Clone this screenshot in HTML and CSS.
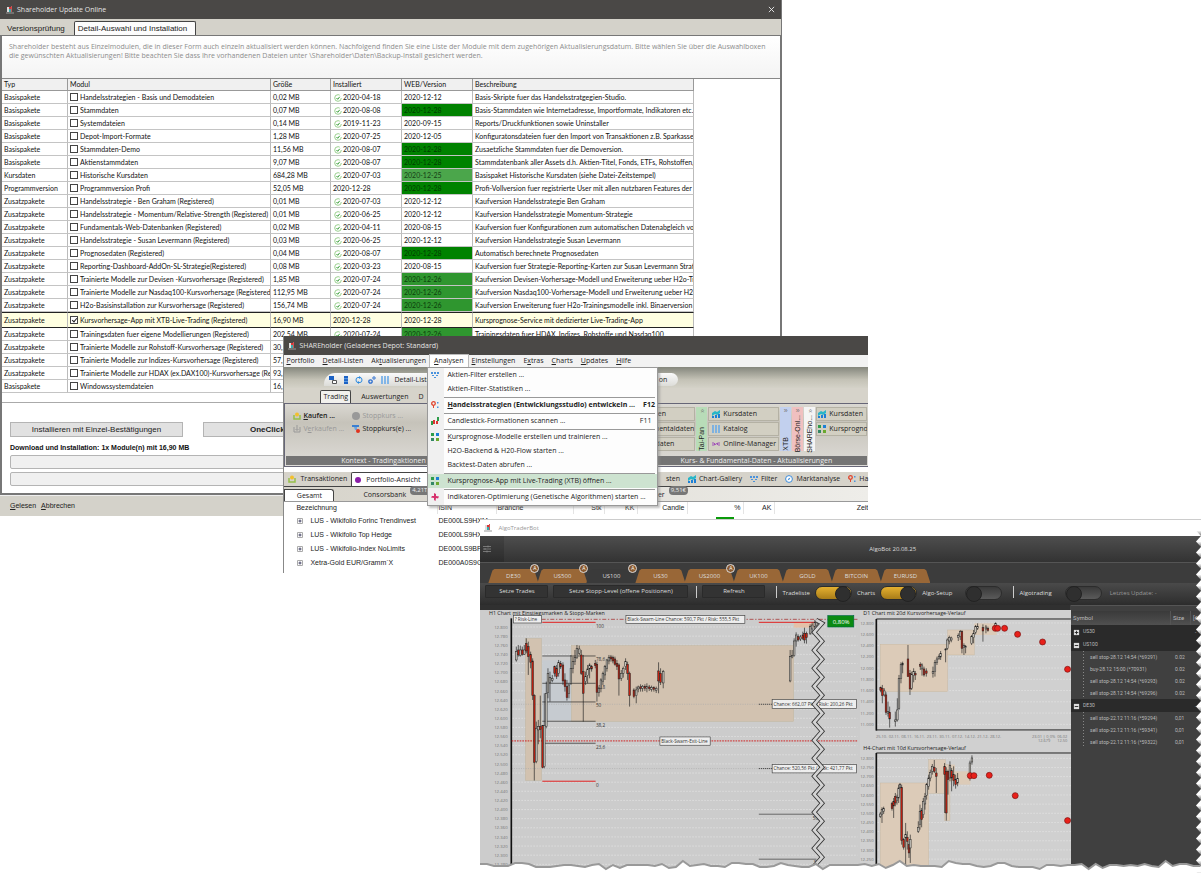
FILE: index.html
```html
<!DOCTYPE html>
<html lang="de">
<head>
<meta charset="utf-8">
<title>Shareholder Update Online</title>
<link rel="stylesheet" href="styles.css">
</head>
<body>
<svg class="defs" aria-hidden="true">
  <symbol id="i-app" viewBox="0 0 8 8"><path d="M1 1h2v5H1z" fill="#ddd"/><path d="M3 1h2v2H3z" fill="#d33"/><path d="M3 3h2v3H3z" fill="#3aa"/><path d="M5 0h1v6H5z" fill="#c55"/><path d="M0 7h8" stroke="#999"/></symbol>
  <symbol id="i-ok" viewBox="0 0 8 8"><circle cx="4" cy="4" r="3.3" fill="#fff" stroke="#9bd08f" stroke-dasharray="17 4"/><path d="M2.5 4l1.2 1.3L5.7 2.8" fill="none" stroke="#2f9a2f"/></symbol>
  <symbol id="i-chart" viewBox="0 0 8 8"><path d="M0 3l3-2 2 1 3-2v3L5 5 3 4 0 6z" fill="#29b6c8"/><path d="M0 6h2v2H0zM3 5h2v3H3zM6 4h2v4H6z" fill="#1c7fd6"/></symbol>
  <symbol id="i-filter" viewBox="0 0 8 8"><path d="M0 1h2v2H0zM3 1h2v2H3zM6 1h2v2H6zM1 4h2v1H1zM5 4h2v1H5zM3 6h2v1H3z" fill="#4a92dc"/></symbol>
  <symbol id="i-grid" viewBox="0 0 8 8"><path d="M0 0h3v3H0z" fill="#2e9c4a"/><path d="M5 0h3v3H5z" fill="#1c7fd6"/><path d="M0 5h3v3H0z" fill="#386"/><path d="M5 5h3v3H5z" fill="#6aa82e"/></symbol>
  <symbol id="i-pin" viewBox="0 0 8 8"><circle cx="2.500" cy="2.500" r="1.800" fill="none" stroke="#e0452e" stroke-width="1.300"/><path d="M2.500 4.500V7" stroke="#e0452e"/><path d="M6 1h1.500v1.500H6zM6 5.500h1.500V7H6z" fill="#4a92dc"/></symbol>
  <symbol id="i-candle" viewBox="0 0 8 8"><path d="M0 4h2v4H0zM6 0h2v4H6z" fill="#2e9c4a"/><path d="M2 3h2v4H2zM5 4h2v3H5z" fill="#d33"/></symbol>
  <symbol id="i-dna" viewBox="0 0 8 8"><path d="M3 0l2 1v2l3 .5L7 5.500 5 5 4.500 8 3 7V5L0 4.500 1 3h2z" fill="#d6306c"/></symbol>
  <symbol id="i-buy" viewBox="0 0 8 8"><path d="M1 3v4h6V3" fill="none" stroke="#96c04a" stroke-width="1.500"/><circle cx="4" cy="2.500" r="2" fill="#f3c02c"/></symbol>
  <symbol id="i-sell" viewBox="0 0 8 8"><path d="M1 2v5h6V2M4 0v5M2.500 4L4 5.500 5.500 4" fill="none" stroke="#999"/></symbol>
  <symbol id="i-stop" viewBox="0 0 8 8"><path d="M0 0h7v2H0z" fill="#3b7fd0"/><path d="M2 2h3v3H3z" fill="#6da4e0"/><circle cx="6" cy="6" r="2" fill="#e0331e"/></symbol>
  <symbol id="i-copy" viewBox="0 0 8 8"><path d="M0 0h5v4H0z" fill="#1c62c4"/><path d="M3.500 4.500h4v3h-4z" fill="#fff" stroke="#555"/></symbol>
  <symbol id="i-server" viewBox="0 0 8 8"><path d="M2 0h4v8H2z" fill="#1c62c4"/><path d="M2 2.700h4M2 5.400h4" stroke="#9cf" stroke-width=".6"/></symbol>
  <symbol id="i-sync" viewBox="0 0 8 8"><path d="M5 1.500H3Q1 1.500 1 4T3 6.500M3 6.500h2Q7 6.500 7 4T5 1.500" fill="none" stroke="#2d8be0"/><path d="M4 0l2 1.500L4 3zM4 5v3L2 6.500z" fill="#2d8be0"/></symbol>
  <symbol id="i-gears" viewBox="0 0 8 8"><circle cx="2.500" cy="5.500" r="1.700" fill="none" stroke="#2d6fd0" stroke-width="1.300"/><circle cx="6" cy="2" r="1.200" fill="none" stroke="#2d6fd0"/></symbol>
  <symbol id="i-cols" viewBox="0 0 8 8"><path d="M1 0v8M4 0v8M7 0v8" stroke="#6aaae8" stroke-width="1.600"/></symbol>
  <symbol id="i-online" viewBox="0 0 8 8"><path d="M1 2v4M7 2v4M2.500 3v2l3-2v2" fill="none" stroke="#a050b8"/></symbol>
  <symbol id="i-compass" viewBox="0 0 8 8"><circle cx="4" cy="4" r="3.400" fill="#fff" stroke="#3b8ad8"/><path d="M2.500 5.500L3.500 3.500 5.500 2.500 4.500 4.500z" fill="#3b8ad8"/></symbol>
  <symbol id="i-plus" viewBox="0 0 8 8"><path d="M1.500 1.500h5v5h-5z" fill="#fff" stroke="#aaa"/><path d="M2.500 4h3M4 2.500v3" stroke="#446"/></symbol>
  <symbol id="i-tplus" viewBox="0 0 8 8"><path d="M1 1h6v6H1z" fill="#ddd"/><path d="M2 4h4M4 2v4" stroke="#222"/></symbol>
  <symbol id="i-tminus" viewBox="0 0 8 8"><path d="M1 1h6v6H1z" fill="#ddd"/><path d="M2 4h4" stroke="#222"/></symbol>
</svg>

<main class="desktop">

<section class="win update" aria-label="Shareholder Update Online">
  <header class="titlebar"><svg class="ico"><use href="#i-app"/></svg><h1>Shareholder Update Online</h1><button class="close" aria-label="Schließen"><svg viewBox="0 0 8 8"><path d="M1 1l6 6M7 1L1 7" stroke="#eee"/></svg></button></header>
  <nav class="tabs"><button class="tab">Versionsprüfung</button><button class="tab on">Detail-Auswahl und Installation</button></nav>
  <div class="panel">
    <p class="intro">Shareholder besteht aus Einzelmodulen, die in dieser Form auch einzeln aktualisiert werden können. Nachfolgend finden Sie eine Liste der Module mit dem zugehörigen Aktualisierungsdatum. Bitte wählen Sie über die Auswahlboxen<br>die gewünschten Aktualisierungen! Bitte beachten Sie dass Ihre vorhandenen Dateien unter \Shareholder\Daten\Backup-Install gesichert werden.</p>
    <div class="modwrap">
    <table class="mods">
      <colgroup><col class="c1"><col class="c2"><col class="c3"><col class="c4"><col class="c5"><col class="c6"></colgroup>
      <thead><tr><th>Typ</th><th>Modul</th><th>Größe</th><th>Installiert</th><th>WEB/Version</th><th>Beschreibung</th></tr></thead>
      <tbody>
      <tr><td>Basispakete</td><td><label><input type="checkbox">Handelsstrategien - Basis und Demodateien</label></td><td>0,02 MB</td><td><svg><use href="#i-ok"/></svg>2020-04-18</td><td>2020-12-12</td><td>Basis-Skripte fuer das Handelsstratgegien-Studio.</td></tr>
      <tr><td>Basispakete</td><td><label><input type="checkbox">Stammdaten</label></td><td>0,07 MB</td><td><svg><use href="#i-ok"/></svg>2020-08-08</td><td class="g1">2020-12-28</td><td>Basis-Stammdaten wie Internetadresse, Importformate, Indikatoren etc.</td></tr>
      <tr><td>Basispakete</td><td><label><input type="checkbox">Systemdateien</label></td><td>0,14 MB</td><td><svg><use href="#i-ok"/></svg>2019-11-23</td><td>2020-09-15</td><td>Reports/Druckfunktionen sowie Uninstaller</td></tr>
      <tr><td>Basispakete</td><td><label><input type="checkbox">Depot-Import-Formate</label></td><td>1,28 MB</td><td><svg><use href="#i-ok"/></svg>2020-07-25</td><td>2020-12-05</td><td>Konfiguratonsdateien fuer den Import von Transaktionen z.B. Sparkasse, Vo</td></tr>
      <tr><td>Basispakete</td><td><label><input type="checkbox">Stammdaten-Demo</label></td><td>11,56 MB</td><td><svg><use href="#i-ok"/></svg>2020-08-07</td><td class="g1">2020-12-28</td><td>Zusaetzliche Stammdaten fuer die Demoversion.</td></tr>
      <tr><td>Basispakete</td><td><label><input type="checkbox">Aktienstammdaten</label></td><td>9,07 MB</td><td><svg><use href="#i-ok"/></svg>2020-08-07</td><td class="g1">2020-12-28</td><td>Stammdatenbank aller Assets d.h. Aktien-Titel, Fonds, ETFs, Rohstoffen, De</td></tr>
      <tr><td>Kursdaten</td><td><label><input type="checkbox">Historische Kursdaten</label></td><td>684,28 MB</td><td><svg><use href="#i-ok"/></svg>2020-07-03</td><td class="g3">2020-12-25</td><td>Basispaket Historische Kursdaten (siehe Datei-Zeitstempel)</td></tr>
      <tr><td>Programmversion</td><td><label><input type="checkbox">Programmversion Profi</label></td><td>52,05 MB</td><td>2020-12-28</td><td class="g1">2020-12-28</td><td>Profi-Vollversion fuer registrierte User mit allen nutzbaren Features der Boe</td></tr>
      <tr><td>Zusatzpakete</td><td><label><input type="checkbox">Handelsstrategie - Ben Graham (Registered)</label></td><td>0,01 MB</td><td><svg><use href="#i-ok"/></svg>2020-07-03</td><td>2020-12-12</td><td>Kaufversion Handelsstrategie Ben Graham</td></tr>
      <tr><td>Zusatzpakete</td><td><label><input type="checkbox">Handelsstrategie - Momentum/Relative-Strength (Registered)</label></td><td>0,01 MB</td><td><svg><use href="#i-ok"/></svg>2020-06-25</td><td>2020-12-12</td><td>Kaufversion Handelsstrategie Momentum-Strategie</td></tr>
      <tr><td>Zusatzpakete</td><td><label><input type="checkbox">Fundamentals-Web-Datenbanken (Registered)</label></td><td>0,02 MB</td><td><svg><use href="#i-ok"/></svg>2020-04-11</td><td>2020-08-15</td><td>Kaufversion fuer Konfigurationen zum automatischen Datenabgleich von Sta</td></tr>
      <tr><td>Zusatzpakete</td><td><label><input type="checkbox">Handelsstrategie - Susan Levermann (Registered)</label></td><td>0,03 MB</td><td><svg><use href="#i-ok"/></svg>2020-06-25</td><td>2020-12-12</td><td>Kaufversion Handelsstrategie Susan Levermann</td></tr>
      <tr><td>Zusatzpakete</td><td><label><input type="checkbox">Prognosedaten (Registered)</label></td><td>0,04 MB</td><td><svg><use href="#i-ok"/></svg>2020-08-07</td><td class="g1">2020-12-28</td><td>Automatisch berechnete Prognosedaten</td></tr>
      <tr><td>Zusatzpakete</td><td><label><input type="checkbox">Reporting-Dashboard-AddOn-SL-Strategie(Registered)</label></td><td>0,08 MB</td><td><svg><use href="#i-ok"/></svg>2020-03-23</td><td>2020-08-15</td><td>Kaufversion fuer Strategie-Reporting-Karten zur Susan Levermann Strategi</td></tr>
      <tr><td>Zusatzpakete</td><td><label><input type="checkbox">Trainierte Modelle zur Devisen -Kursvorhersage (Registered)</label></td><td>1,85 MB</td><td><svg><use href="#i-ok"/></svg>2020-07-24</td><td class="g2">2020-12-26</td><td>Kaufversion Devisen-Vorhersage-Modell und Erweiterung ueber H2o-Traini</td></tr>
      <tr><td>Zusatzpakete</td><td><label><input type="checkbox">Trainierte Modelle zur Nasdaq100-Kursvorhersage (Registered)</label></td><td>112,95 MB</td><td><svg><use href="#i-ok"/></svg>2020-07-24</td><td class="g2">2020-12-26</td><td>Kaufversion Nasdaq100-Vorhersage-Modell und Erweiterung ueber H2o-Tr</td></tr>
      <tr><td>Zusatzpakete</td><td><label><input type="checkbox">H2o-Basisinstallation zur Kursvorhersage (Registered)</label></td><td>156,74 MB</td><td><svg><use href="#i-ok"/></svg>2020-07-24</td><td class="g2">2020-12-26</td><td>Kaufversion Erweiterung fuer H2o-Trainingsmodelle inkl. Binaerversion und</td></tr>
      <tr class="sel"><td>Zusatzpakete</td><td><label><input type="checkbox" checked>Kursvorhersage-App mit XTB-Live-Trading (Registered)</label></td><td>16,90 MB</td><td>2020-12-28</td><td>2020-12-28</td><td>Kursprognose-Service mit dedizierter Live-Trading-App</td></tr>
      <tr><td>Zusatzpakete</td><td><label><input type="checkbox">Trainingsdaten fuer eigene Modellierungen (Registered)</label></td><td>202,54 MB</td><td><svg><use href="#i-ok"/></svg>2020-07-24</td><td class="g2">2020-12-26</td><td>Trainingsdaten fuer HDAX, Indizes, Rohstoffe und Nasdaq100</td></tr>
      <tr><td>Zusatzpakete</td><td><label><input type="checkbox">Trainierte Modelle zur Rohstoff-Kursvorhersage (Registered)</label></td><td>30,</td><td></td><td></td><td></td></tr>
      <tr><td>Zusatzpakete</td><td><label><input type="checkbox">Trainierte Modelle zur Indizes-Kursvorhersage (Registered)</label></td><td>57,</td><td></td><td></td><td></td></tr>
      <tr><td>Zusatzpakete</td><td><label><input type="checkbox">Trainierte Modelle zur HDAX (ex.DAX100)-Kursvorhersage (Regis</label></td><td>93,</td><td></td><td></td><td></td></tr>
      <tr><td>Basispakete</td><td><label><input type="checkbox">Windowssystemdateien</label></td><td>16,</td><td></td><td></td><td></td></tr>
      </tbody>
    </table>
    </div>
    <div class="actions"><button>Installieren mit Einzel-Bestätigungen</button><button class="strong">OneClick</button></div>
    <p class="status">Download und Installation: 1x Module(n) mit 16,90 MB</p>
    <div class="bar" role="progressbar" aria-label="Download"></div>
    <div class="bar" role="progressbar" aria-label="Installation"></div>
  </div>
  <footer class="foot"><button><u>G</u>elesen</button><button><u>A</u>bbrechen</button></footer>
</section>

<section class="win holder" aria-label="SHAREholder">
  <header class="titlebar"><svg class="ico"><use href="#i-app"/></svg><h2>SHAREholder (Geladenes Depot: Standard)</h2></header>
  <nav class="menubar"><button><u>P</u>ortfolio</button><button><u>D</u>etail-Listen</button><button>Ak<u>t</u>ualisierungen</button><button class="open"><u>A</u>nalysen</button><button><u>E</u>instellungen</button><button>E<u>x</u>tras</button><button><u>C</u>harts</button><button><u>U</u>pdates</button><button><u>H</u>ilfe</button></nav>
  <div class="quick"><div class="pill"><svg><use href="#i-copy"/></svg><svg><use href="#i-server"/></svg><svg><use href="#i-sync"/></svg><svg><use href="#i-gears"/></svg><svg><use href="#i-cols"/></svg><span>Detail-Listen</span><span class="end">on</span></div></div>
  <nav class="rtabs"><button class="on">Trading</button><button>Auswertungen</button><button>D</button></nav>
  <div class="ribbon">
    <div class="group g-left">
      <div class="cmds">
        <button><svg><use href="#i-buy"/></svg><b><u>K</u>aufen ...</b></button>
        <button disabled><svg viewBox="0 0 8 8"><circle cx="4" cy="4" r="4" fill="#999"/></svg>Stoppkurs ...</button>
        <button disabled><svg><use href="#i-sell"/></svg><span>V<u>e</u>rkaufen ...</span></button>
        <button><svg><use href="#i-stop"/></svg>Stoppkurs(e) ...</button>
      </div>
      <h3>Kontext - Tradingaktionen</h3>
    </div>
    <div class="group g-right">
      <div class="sources">
        <div class="stack first"><button>Kursdaten</button><button>Fundamentaldaten</button><button>Stammdaten</button></div>
        <div class="vert green"><i>«</i><span>Tai-Pan</span></div>
        <div class="stack"><button><svg><use href="#i-chart"/></svg>Kursdaten</button><button><svg><use href="#i-cols"/></svg>Katalog</button><button><svg><use href="#i-online"/></svg>Online-Manager</button></div>
        <div class="vert blue"><i>»</i><span>XTB</span></div>
        <div class="vert red"><i>»</i><span>Börse-Onl...</span></div>
        <div class="vert white"><i>«</i><span>SHAREho...</span></div>
        <div class="stack narrow"><button><svg><use href="#i-chart"/></svg>Kursdaten</button><button><svg><use href="#i-grid"/></svg>Kursprognose</button></div>
      </div>
      <h3>Kurs- &amp; Fundamental-Daten - Aktualisierungen</h3>
    </div>
  </div>
  <nav class="dtabs">
    <button><svg><use href="#i-buy"/></svg>Transaktionen</button><button class="on"><svg viewBox="0 0 8 8"><circle cx="4" cy="4" r="3" fill="#8a1ea8"/></svg>Portfolio-Ansicht</button>
    <div class="more"><button>sten</button><button><svg><use href="#i-chart"/></svg>Chart-Gallery</button><button><svg><use href="#i-filter"/></svg>Filter</button><button><svg><use href="#i-compass"/></svg>Marktanalyse</button><button><svg><use href="#i-pin"/></svg>Ha</button></div>
  </nav>
  <nav class="stabs"><button class="on">Gesamt</button><button class="bank">Consorsbank<span class="badge">4,21T€</span></button><button class="ker">ker<span class="badge">9,51€</span></button></nav>
  <table class="pos">
    <colgroup><col class="p1"><col class="p2"><col class="p3"><col class="p4"><col class="p5"><col class="p6"><col class="p7"><col class="p8"><col class="p9"></colgroup>
    <thead><tr><th>Bezeichnung</th><th>ISIN</th><th>Branche</th><th class="r">Stk</th><th class="r">KK</th><th class="r">Candle</th><th class="r">%</th><th class="r">AK</th><th class="r">Zeit</th></tr></thead>
    <tbody>
    <tr><td><svg><use href="#i-plus"/></svg>LUS - Wikifolio Forinc Trendinvest</td><td>DE000LS9HXM</td><td></td><td></td><td></td><td></td><td class="top"><span class="gain"></span></td><td></td><td></td></tr>
    <tr><td><svg><use href="#i-plus"/></svg>LUS - Wikifolio Top Hedge</td><td>DE000LS9HXS</td><td></td><td></td><td></td><td></td><td></td><td></td><td></td></tr>
    <tr><td><svg><use href="#i-plus"/></svg>LUS - Wikifolio-Index NoLimits</td><td>DE000LS9BFD</td><td></td><td></td><td></td><td></td><td></td><td></td><td></td></tr>
    <tr><td><svg><use href="#i-plus"/></svg>Xetra-Gold EUR/Gramm`X</td><td>DE000A0S9GB</td><td></td><td></td><td></td><td></td><td></td><td></td><td></td></tr>
    </tbody>
  </table>
  <div class="menu" role="menu">
    <button role="menuitem"><svg><use href="#i-filter"/></svg>Aktien-Filter erstellen ...</button>
    <button role="menuitem"><svg></svg>Aktien-Filter-Statistiken ...</button>
    <hr>
    <button role="menuitem" class="strong"><svg><use href="#i-pin"/></svg><span><u>H</u>andelsstrategien (Entwicklungsstudio) entwickeln ...</span><kbd>F12</kbd></button>
    <hr>
    <button role="menuitem"><svg><use href="#i-candle"/></svg>Candlestick-Formationen scannen ...<kbd>F11</kbd></button>
    <hr>
    <button role="menuitem"><svg><use href="#i-grid"/></svg><span><u>K</u>ursprognose-Modelle erstellen und trainieren ...</span></button>
    <button role="menuitem"><svg></svg>H2O-Backend &amp; H20-Flow starten ...</button>
    <button role="menuitem"><svg></svg>Backtest-Daten abrufen ...</button>
    <hr>
    <button role="menuitem" class="hot"><svg><use href="#i-grid"/></svg>Kursprognose-App mit Live-Trading (XTB) öffnen ...</button>
    <hr>
    <button role="menuitem"><svg><use href="#i-dna"/></svg>Indikatoren-Optimierung (Genetische Algorithmen) starten ...</button>
  </div>
</section>

<section class="win bot" aria-label="AlgoTraderBot">
  <header class="bottitle"><svg class="ico"><use href="#i-app"/></svg><span>AlgoTraderBot</span></header>
  <div class="bothead"><button class="tune" aria-label="Optionen"><svg viewBox="0 0 8 8"><path d="M0 1.500h8M0 4h8M0 6.500h8M5 .5v2M2 3v2M4 5.500v2" stroke="#888" fill="none" stroke-width=".8"/></svg></button><h2>AlgoBot 20.08.25</h2></div>
  <nav class="symbols">
    <div><button>DE30</button><i>A</i></div><div><button>US500</button><i>A</i></div><div class="on"><button>US100</button><i>A</i></div><div><button>US30</button></div><div><button>US2000</button><i>A</i></div><div><button>UK100</button></div><div><button>GOLD</button></div><div><button>BITCOIN</button></div><div><button>EURUSD</button></div>
  </nav>
  <div class="tools">
    <button class="t1">Setze Trades</button><button class="t2">Setze Stopp-Level (offene Positionen)</button><span class="sep"></span><button class="t1">Refresh</button><span class="sep"></span>
    <label>Tradeliste<input type="checkbox" checked></label>
    <label>Charts<input type="checkbox" checked></label>
    <label class="wide">Algo-Setup<input type="checkbox"></label>
    <span class="sep"></span>
    <label class="wide">Algotrading<input type="checkbox"></label>
    <span class="stamp">Letztes Update: -</span>
  </div>
  <div class="board">
    <svg id="h1" viewBox="15 0 1140 804"></svg>
    <div class="side-charts">
      <svg id="d1" viewBox="0 0 633 418"></svg>
      <svg id="h4" viewBox="0 418 633 386"></svg>
    </div>
    <div class="trades">
    <table>
      <colgroup><col><col class="size"><col class="rest"></colgroup>
      <thead><tr><th>Symbol</th><th>Size</th><th>[€</th></tr></thead>
      <tbody>
        <tr class="grp"><td><svg><use href="#i-tplus"/></svg>US30</td><td></td><td>-</td></tr>
        <tr class="grp"><td><svg><use href="#i-tminus"/></svg>US100</td><td></td><td></td></tr>
        <tr><td>sell stop-28.12 14:54 (*69291)</td><td>0.02</td><td></td></tr>
        <tr><td>buy-28.12 15:00 (*70931)</td><td>0.02</td><td></td></tr>
        <tr><td>sell stop-28.12 14:54 (*69293)</td><td>0.02</td><td></td></tr>
        <tr><td>sell stop-28.12 14:54 (*69296)</td><td>0.02</td><td></td></tr>
        <tr class="grp"><td><svg><use href="#i-tminus"/></svg>DE30</td><td></td><td>-</td></tr>
        <tr><td>sell stop-22.12 11:16 (*59294)</td><td>0,01</td><td></td></tr>
        <tr><td>sell stop-22.12 11:16 (*59341)</td><td>0,01</td><td></td></tr>
        <tr><td>sell stop-22.12 11:16 (*59322)</td><td>0,01</td><td></td></tr>
      </tbody>
    </table>
    </div>
  </div>
  <svg class="torn" viewBox="0 0 721 14" preserveAspectRatio="none" aria-hidden="true"><path id="torn" fill="#fff" stroke="#999" stroke-width="2"/></svg>
  <svg class="teeth" aria-hidden="true"><defs><linearGradient id="tg" x1="0" x2="0" y1="0" y2="1"><stop offset="0" stop-color="#fff"/><stop offset=".5" stop-color="#fff"/><stop offset="1" stop-color="#777"/></linearGradient><pattern id="tp" width="5" height="11" patternUnits="userSpaceOnUse"><path d="M5 0L0 5.500 5 11z" fill="url(#tg)"/></pattern></defs><rect width="5" height="100%" fill="url(#tp)"/></svg>
</section>
</main>
<script src="charts.js"></script>
</body>
</html>
```

FILE: styles.css
```css
* { box-sizing: border-box; }
body { margin: 0; background: #fff; color: #222; font-family: "Open Sans", "Liberation Sans", sans-serif; font-size: 7px; line-height: 10px; }
h1, h2, h3, p { margin: 0; font-size: inherit; font-weight: normal; }
button { font: inherit; color: inherit; background: none; border: 0; padding: 0; margin: 0; white-space: nowrap; }
input { margin: 0; appearance: none; }
table { border-spacing: 0; table-layout: fixed; }
th, td { padding: 0; font-weight: normal; text-align: left; white-space: nowrap; overflow: hidden; }
svg { width: 8px; height: 8px; flex: none; display: block; }
.defs { display: none; }

.desktop { position: relative; min-height: 100vh; overflow: hidden; }
.win { position: absolute; }
.titlebar { height: 19px; display: flex; align-items: center; gap: 3px; padding: 0 6px; background: #4a4846; color: #e4e4e4; }
.close { margin-left: auto; }
.close svg { width: 7px; height: 7px; }

/* Update window */
.update { left: 0; top: 0; width: 65.1%; font-family: "Liberation Sans", sans-serif; background: #d4d2ca; border-right: 1px solid #777; }
.update h1 { font-family: "Open Sans", sans-serif; }
.tabs { height: 16px; display: flex; align-items: flex-end; padding-left: 2px; font-size: 8px; }
.tab { height: 13px; padding: 0 9px 0 5px; }
.tab.on { height: 14px; background: #fcfcfc; border: 1px solid #444; border-bottom: 0; border-radius: 2px 2px 0 0; padding: 0 8px 0 3px; }
.panel { background: #fff; border: solid #777; border-width: 1px 1px 2px 2px; padding-bottom: 4px; }
.intro { height: 42px; padding: 6px 0 0 7px; color: #8c8c8c; line-height: 9px; font-family: "Open Sans", sans-serif; background: linear-gradient(#fff, #f4f4f4); white-space: nowrap; }
.modwrap { border-top: 1px solid #888; border-bottom: 1px solid #aaa; padding-bottom: 9px; }
.mods { width: 692px; max-width: 100%; color: #111; font-family: Lato, "Liberation Sans", sans-serif; }
.c1 { width: 66px; } .c2 { width: 203px; } .c3 { width: 60px; } .c4, .c5 { width: 71px; }
.mods th, .mods td { height: 13px; line-height: 12px; padding-left: 2px; border-right: 1px solid #bbb; border-bottom: 1px solid #c4c4c4; }
.mods th { height: 12px; line-height: 11px; background: #f0f0f0; border-color: #999; }
.mods td svg { display: inline-block; vertical-align: middle; margin-right: 1px; margin-left: 1px; }
.mods label { display: flex; align-items: center; gap: 2px; }
.mods input { width: 8px; height: 8px; border: 1px solid #444; background: #fff; flex: none; position: relative; }
.mods input:checked::after { content: ""; position: absolute; left: 2px; top: 0; width: 2px; height: 4px; border: solid #222; border-width: 0 1px 1px 0; box-sizing: content-box; transform: rotate(40deg); }
.mods .g1 { background: #008200; color: #023c02; }
.mods .g2 { background: #2f962f; color: #0c3f0c; }
.mods .g3 { background: #4ba64b; color: #164016; }
.mods .sel td { height: 16px; background: #ffffe1; border-top: 1px solid #222; border-bottom: 1px solid #222; }
.actions { display: flex; gap: 20px; padding: 19px 0 0 8px; font-size: 8px; }
.actions button { width: 173px; height: 15px; background: #e1e1e1; border: 1px solid #b4b4b4; }
.actions .strong { font-weight: bold; text-align: left; padding-left: 46px; }
.status { font-weight: bold; margin: 6px 8px 2px; color: #111; }
.bar { height: 14px; margin: 0 8px 3px; border: 1px solid #b4b4b4; border-radius: 2px; background: #f0f0f0; }
.foot { height: 21px; display: flex; align-items: center; gap: 5px; padding: 0 10px; border-top: 1px solid #eee; }

/* Main application window */
.holder { left: 23.6%; top: 336px; width: 48.7%; padding-bottom: 3px; background: #fff; border-left: 1px solid #888; }
.holder .titlebar { padding-left: 4px; }
.menubar { height: 12px; display: flex; background: #f2f2f2; }
.menubar button { padding: 0 4px; }
.menubar button:first-child { padding-left: 2px; }
.menubar .open { background: #fff; outline: 1px solid #bbb; }
.quick { height: 21px; padding: 6px 190px 2px 40px; background: linear-gradient(#84867c, #c4c2b6 60%, #d4d2c8); }
.pill { height: 13px; display: flex; align-items: center; gap: 5px; padding: 0 11px 0 5px; background: linear-gradient(#fafafa, #dcdcd8); border-radius: 12px 7px 7px 0; }
.pill .end { margin-left: auto; }
.rtabs { height: 15px; display: flex; align-items: flex-end; gap: 10px; padding-left: 36px; background: #d6d3ca; }
.rtabs button { height: 13px; }
.rtabs .on { background: #f2f1ee; border: 1px solid #444; border-bottom: 0; border-radius: 2px 2px 0 0; padding: 0 2px; }
.ribbon { display: flex; height: 64px; border: solid #667; border-width: 1px 0 1px 1px; background: linear-gradient(#dad8d2, #c6c3ba 30%, #dedcd8); padding: 1px; }
.group { display: flex; flex-direction: column; justify-content: space-between; min-width: 0; }
.g-left { width: 194px; }
.g-right { flex: 1; }
.group h3 { height: 9px; line-height: 9px; background: #747474; color: #eee; text-align: center; white-space: nowrap; }
.group.g-right h3 { padding-left: 165px; }
.cmds { display: grid; grid-template-columns: 59px 80px; gap: 3px 0; padding: 6px 0 0 7px; }
.cmds button { display: flex; align-items: center; gap: 2px; }
.cmds b { font-weight: 600; }
.cmds button:disabled { color: #999; }
.sources { display: flex; gap: 1px; padding-top: 2px; justify-content: flex-end; }
.stack { display: flex; flex-direction: column; gap: 1px; width: 71px; }
.stack.narrow { width: 51px; overflow: hidden; }
.stack button { height: 14px; display: flex; align-items: center; gap: 3px; padding: 0 3px; border: 1px solid #b4b1a4; background: #d2cfc2; }
.stack.narrow button { padding: 0 1px; }
.stack.first { width: 80px; }
.stack.first button { padding-left: 16px; }
.vert { width: 11px; height: 44px; display: flex; flex-direction: column; align-items: center; justify-content: space-between; font-family: "Liberation Sans", sans-serif; line-height: 9px; }
.vert i { font-style: normal; line-height: 8px; color: #777; transform: rotate(90deg); }
.vert.blue i, .vert.red i { transform: none; }
.vert span { writing-mode: vertical-rl; transform: rotate(180deg); white-space: nowrap; }
.green { background: #b8dcb8; } .blue { background: #c2d0ee; } .red { background: #f0c0c0; } .white { background: #f4f4f4; }
.dtabs { height: 20px; display: flex; align-items: flex-end; background: #d6d3ca; border-top: 5px solid #fff; border-bottom: 1px solid #444; }
.dtabs button { height: 14px; display: flex; align-items: center; gap: 4px; padding: 0 4px; }
.dtabs .on { background: #fff; border: 1px solid #444; border-bottom: 0; border-radius: 2px 2px 0 0; width: 90px; padding: 0 2px; }
.more { display: flex; margin-left: auto; }
.dtabs .more button { gap: 3px; }
.dtabs .more button:last-child { padding-right: 0; }
.stabs { height: 15px; display: flex; align-items: flex-end; background: linear-gradient(90deg, #d6d3ca, #eeede9); border-bottom: 1px solid #999; }
.stabs button { height: 12px; position: relative; }
.stabs .on { width: 50px; background: #fff; border: 1px solid #444; border-bottom: 0; border-radius: 0 3px 0 0; }
.stabs .bank { margin-left: 29px; }
.stabs .ker { margin-left: 248px; }
.badge { position: absolute; left: 100%; bottom: 6px; margin-left: 4px; padding: 0 2px; line-height: 9px; font-size: 6px; border-radius: 4px; background: #777; color: #eee; }
.pos { width: 100%; font-family: "Liberation Sans", sans-serif; }
.pos th { height: 12px; border-right: 1px solid #e4e4e4; }
.pos td { height: 14px; }
.pos .top { vertical-align: top; }
.pos th:first-child, .pos td:first-child { padding-left: 12px; }
.pos td svg { display: inline-block; vertical-align: middle; margin-right: 6px; }
.pos .r { text-align: right; padding-right: 3px; }
.pos .r:last-child { padding-right: 0; border-right: 0; }
.p1 { width: 154px; } .p2 { width: 59px; } .p3 { width: 77px; } .p4 { width: 31px; } .p5 { width: 33px; } .p6 { width: 50px; } .p7 { width: 56px; } .p8 { width: 31px; }
.gain { display: block; width: 18px; height: 6px; margin: 3px 0 0 28px; background: #0a9a0a; }
.menu { position: absolute; left: 143px; top: 31px; width: 231px; padding-bottom: 1px; background: linear-gradient(90deg, #f0f0f0 16px, #fdfdfd 16px); border: 1px solid #999; box-shadow: 2px 2px 2px #8888; }
.menu button { width: 100%; height: 14px; display: flex; align-items: center; gap: 8px; padding: 0 6px 0 3px; }
.menu .strong { font-weight: bold; }
.menu .hot { background: #cde3d0; }
.menu kbd { font: inherit; margin-left: auto; }
.menu hr { height: 1px; margin: 1px 2px 0 16px; border: 0; background: #999; }

/* Trading bot window */
.bot { left: 40%; right: 0; top: 519px; background: #3c3c3c; color: #c8c8c8; font-size: 6px; line-height: 9px; }
.bottitle { height: 17px; display: flex; align-items: center; gap: 6px; padding-left: 4px; background: #fff; border-top: 1px solid #ccc; color: #999; }
.bothead { height: 27px; display: flex; background: linear-gradient(#4e4e4e, #333); border-bottom: 1px solid #555; }
.tune { width: 24px; display: flex; align-items: center; padding-left: 3px; background: #0002; }
.bothead h2 { flex: 1; align-self: center; text-align: center; padding-left: 80px; color: #ddd; }
.symbols { height: 20px; display: flex; align-items: flex-end; padding-left: 8px; background: #3c3c3c; }
.symbols div { position: relative; width: 49px; }
.symbols button { display: block; width: 50px; height: 14px; background: #996737; color: #ddd; clip-path: polygon(0 100%, 4px 10%, 6px 0, 44px 0, 46px 10%, 100% 100%); }
.symbols .on button { background: #3a3a3a; }
.symbols i { position: absolute; right: -2px; top: -5px; width: 9px; height: 9px; border: 1px solid #ddd; border-radius: 50%; background: #8a5a30; color: #fff; font-style: normal; font-size: 5px; line-height: 7px; text-align: center; z-index: 1; }
.tools { height: 22px; display: flex; align-items: flex-start; gap: 5px; padding: 2px 5px; background: linear-gradient(#4a4a4a, #333 80%, #2c2c2c); color: #ddd; }
.tools button { height: 13px; background: #333; border: 1px solid #2a2a2a; border-radius: 1px; }
.t1 { width: 63px; } .t2 { width: 135px; }
.sep { width: 1px; height: 12px; margin-top: 1px; background: #ccc; }
.tools .t1 + .sep, .tools label + .sep { margin-left: 6px; }
.tools .t2 + .sep { margin-left: 3px; }
.tools label { display: flex; align-items: center; gap: 5px; height: 16px; }
.tools .wide { gap: 13px; }
.tools input { position: relative; width: 37px; height: 14px; border-radius: 7px; background: linear-gradient(#3a3a3a, #5a5a5a); border: 1px solid #2c2c2c; }
.tools input::after { content: ""; position: absolute; left: 0; top: -1px; width: 14px; height: 14px; border-radius: 50%; background: #2f2f2f; border: 1px solid #222; }
.tools input:checked { background: linear-gradient(#e4b030, #a87c18); }
.tools input:checked::after { left: auto; right: 0; }
.stamp { line-height: 16px; margin-left: 3px; color: #999; }
.board { display: grid; grid-template-columns: 380fr 211fr 130fr; background: #ccc; }
.board svg { width: 100%; height: auto; }
.board text { font-family: "Open Sans", sans-serif; font-size: 13px; fill: #777; }
.board text.head { font-size: 16px; fill: #222; }
.board text.tag { font-size: 14px; fill: #333; }
.board text.pct { font-size: 18px; fill: #fff; }
.board text.day { font-size: 12px; }
.trades { background: #404040; color: #bbb; padding-top: 5px; border-top: 1px solid #555; font-family: Roboto, sans-serif; font-size: 5px; line-height: 8px; }
.trades table { width: 100%; }
.trades th { height: 14px; background: linear-gradient(#3a3a3a, #505050); font-size: 6px; border-right: 1px solid #555; padding-left: 2px; }
.trades .size { width: 20px; } .trades .rest { width: 10px; }
.trades td { height: 12px; padding-left: 4px; }
.trades td:first-child { padding-left: 19px; background: repeating-linear-gradient(#888 0 1px, transparent 1px 3px) 12px 0 / 1px 100% no-repeat; }
.trades .grp td { height: 13px; background: #2a2a2a; }
.trades .grp td:first-child { padding-left: 2px; }
.trades td svg { display: inline-block; width: 7px; height: 7px; margin-right: 3px; vertical-align: middle; }
.bot .torn { position: absolute; left: 0; bottom: 0; width: 100%; height: 14px; }
.bot .teeth { position: absolute; right: 0; top: 6px; width: 5px; height: calc(100% - 6px); }
```

FILE: charts.js
```js
const BEIGE = '#d2c2b0';
const TAN = '#dccbb8';

const line = (x1, y1, x2, y2, stroke, extra = '') =>
  `<path d="M${x1} ${y1}L${x2} ${y2}" stroke="${stroke}" fill="none" ${extra}/>`;
const rect = (x, y, x2, y2, fill, extra = '') =>
  `<rect x="${x}" y="${y}" width="${x2 - x}" height="${y2 - y}" fill="${fill}" ${extra}/>`;
const text = (x, y, s, extra = '') => `<text x="${x}" y="${y}" ${extra}>${s}</text>`;
const tag = (x, y, x2, y2, s) =>
  rect(x, y, x2, y2, '#eee', 'stroke="#444" stroke-width="2"') + text(x + 4, (y + y2) / 2 + 5, s, 'class="tag"');

// Each candle: x, high, low, body top, body bottom, 1 when falling
const candles = (rows, w) => rows.map(([x, hi, lo, a, b, c]) =>
  line(x, hi, x, lo, '#222', 'stroke-width="2"') +
  rect(x - w / 2, a, x + w / 2, Math.max(b, a + 3), c ? '#c2200f' : '#c8c4bc', 'stroke="#222" stroke-width="1.500"')).join('');

const axis = (from, step, y0, dy, n, x, x1, x2) => {
  let out = '';
  for (let i = 0; i < n; i++) {
    const v = ((from - i * step) / 1000).toFixed(3);
    const y = y0 + i * dy;
    out += text(x, y + 5, v, 'text-anchor="end"') + line(x1, y, x2, y, '#e6e6e6', 'stroke-dasharray="5 4" stroke-width="2"');
  }
  return out;
};
const dots = (pts) => pts.map(([x, y]) => `<circle cx="${x}" cy="${y}" r="9" fill="#e8201a" stroke="#711" stroke-width="2"/>`).join('');

function drawH1() {
  const c = [
    [124,125,170,140,165],[130,120,155,135,150,1],[136,122,155,135,152],[142,125,152,135,148,1],[148,120,150,135,148],[154,100,145,115,138,1],
    [160,110,210,125,155,1],[167,140,190,148,172,1],[173,160,285,168,272,1],[178,268,527,272,472,1],[184,350,475,370,470],[190,345,418,365,375],
    [196,272,400,365,374,1],[203,360,490,362,488,1],[208,265,490,362,485],[214,230,370,265,365],[219,190,280,205,262],[225,200,290,218,232],
    [232,210,232,220,226],[239,182,215,185,205,1],[245,180,222,190,215,1],[251,165,215,172,205],[257,168,192,175,186,1],[264,172,240,180,228,1],
    [270,205,260,225,245,1],[276,225,287,245,278,1],[282,235,280,240,265],[288,150,240,190,235],[294,155,205,170,190],[300,135,180,158,170],
    [306,120,162,130,158],[313,122,150,132,145],[319,135,210,150,205,1],[325,150,350,200,265,1],[332,200,240,215,230],[338,180,235,192,212],
    [344,175,220,180,192],[350,180,200,185,192,1],[361,165,190,175,182,1],[366,170,290,178,262,1],[372,245,275,250,262],[378,220,262,225,250],
    [384,200,240,205,230],[390,180,225,185,210],[396,162,200,165,190],[402,150,178,158,168],[408,150,170,156,162,1],[414,152,175,158,168,1],
    [420,155,182,162,178,1],[426,165,195,175,185,1],[432,175,272,180,222,1],[439,195,228,205,220],[445,185,218,190,205],[452,160,195,170,185],
    [458,170,225,178,205,1],[464,200,305,205,272,1],[477,250,280,255,275,1],[484,245,295,255,272],[490,242,262,246,252],[497,238,260,246,250,1],
    [503,240,260,244,250],[510,238,258,244,250,1],[516,235,262,245,250],[523,240,258,246,251,1],[530,242,260,248,253],[537,244,260,248,253,1],
    [544,245,264,250,256],[551,172,265,198,228,1],[557,190,240,205,232,1],[565,195,250,200,234],
    [946,135,232,155,228],[952,135,160,152,156],[958,100,155,108,152],[964,82,125,90,108],[970,88,110,95,105,1],[977,90,108,96,102],
    [984,80,105,90,100,1],[989,68,115,85,105,1],[995,80,116,85,98,1],[1006,58,90,65,85],[1012,52,88,60,72],[1020,45,75,52,66],[1026,44,68,50,62]
  ];
  let s = rect(15, 15, 1161, 804, '#cccccc') + axis(12800, 20, 66, 27.4, 27, 98, 112, 1148);
  s += rect(151, 100, 200, 527, BEIGE, 'stroke="#b7b19a"') + rect(202, 166, 289, 345, '#c6cbd0') + rect(289, 121, 957, 350, BEIGE, 'stroke="#b7b19a"');
  s += rect(957, 53, 1020, 68, '#e4c0a8');
  [298, 491].forEach(y => { s += line(110, y, 892, y, '#aaa', 'stroke-dasharray="3 4" stroke-width="2"') + line(852, y, 892, y, '#333', 'stroke-dasharray="3 3" stroke-width="3"'); });
  [[153, '78,6'], [235, '61,8'], [291, '50'], [349, '38,2'], [415, '23,6']].forEach(([y, t]) => { s += line(202, y, 362, y, '#222', 'stroke-width="2"') + text(363, y + 16, t, 'class="tag"'); });
  [[52, '100'], [529, '0']].forEach(([y, t]) => { s += line(202, y, 362, y, '#e02020', 'stroke-width="3"') + text(363, y + 17, t, 'class="tag"'); });
  s += line(109, 40, 109, 804, '#111', 'stroke-width="5"');
  s += line(200, 43, 1150, 43, '#a01818', 'stroke-dasharray="12 5 4 5" stroke-width="2"') + line(110, 408, 1150, 408, '#d02020', 'stroke-dasharray="5 3" stroke-width="3"');
  s += line(852, 52, 1024, 52, '#e02020', 'stroke-width="3"') + line(852, 628, 1025, 628, '#333', 'stroke-width="2"') + line(852, 763, 1025, 763, '#333', 'stroke-width="2"');
  s += candles(c, 5);
  s += text(42, 31, 'H1 Chart mit Einstiegsmarken &amp; Stopp-Marken', 'class="head"');
  s += tag(115, 32, 200, 54, '? Risk-Line') + tag(453, 32, 810, 55, 'Black-Swarn-Line Chance: 590,7 Pkt / Risk: 555,5 Pkt');
  s += tag(555, 396, 706, 421, 'Black-Swarn-Exit-Line') + tag(892, 284, 1145, 311, 'Chance: 662,07 Pkt / Risk: 200,26 Pkt') + tag(892, 479, 1145, 504, 'Chance: 520,56 Pkt / Risk: 421,77 Pkt');
  s += text(1014, 644, '50', 'class="tag"') + text(1016, 778, '38', 'class="tag"');
  let z = 'M1024 45';
  for (let y = 55, i = 0; y < 800; y += 27, i++) z += `L${i % 2 ? 1018 : 1042} ${y}`;
  s += `<path d="${z}" fill="none" stroke="#333" stroke-width="13"/><path d="${z}" fill="none" stroke="#d4d4d4" stroke-width="8"/>`;
  s += rect(1059, 32, 1137, 66, '#0a8a12', 'stroke="#064" stroke-width="2"') + text(1074, 56, '0,80%', 'class="pct"');
  document.getElementById('h1').innerHTML = s + rect(15, 0, 1161, 15, '#303030');
}

function drawD1() {
  const c = [
    [62,245,262,248,256,1],[67,240,295,250,272,1],[73,250,275,258,270],[78,262,330,270,322,1],[84,290,335,320,326],[89,305,368,322,342,1],
    [106,320,365,345,349],[112,280,350,315,345],[117,210,315,220,310],[123,172,235,178,220],[128,170,205,176,180],[144,120,215,162,215,1],
    [150,195,270,205,252,1],[155,200,255,208,250],[161,190,232,200,212],[166,198,225,205,210,1],[181,172,195,178,184,1],[186,175,212,180,192],
    [192,185,215,192,210,1],[199,190,215,198,205,1],[219,185,218,200,205],[225,165,215,172,200],[231,155,180,162,172],[237,148,165,155,161],
    [242,138,165,146,156],[257,130,172,132,135],[262,100,135,105,130],[268,92,118,98,108],[274,95,112,99,105],[295,85,108,92,98],
    [301,75,105,80,95],[306,76,145,80,130,1],[312,115,150,122,128],[317,120,145,124,128],[335,90,120,95,116],[341,75,115,85,98],
    [347,60,88,65,82],[353,55,75,64,70],[369,58,110,68,78,1],[378,60,85,66,72],[384,65,80,70,76,1],[407,52,72,55,70]
  ];
  let s = rect(0, 15, 633, 429, '#d0d0d0') + axis(12800, 200, 54, 33.8, 10, 41, 52, 633);
  s += rect(61, 118, 263, 260, TAN, 'stroke="#c2b094"') + rect(263, 75, 343, 150, TAN, 'stroke="#c2b094"') + rect(343, 55, 410, 90, TAN);
  s += `<path d="M49 42H633M49 375H633" fill="none" stroke="#222" stroke-width="3"/>` + line(49, 42, 49, 377, '#111', 'stroke-width="5"');
  s += candles(c, 5) + dots([[406, 70], [413, 70], [434, 70], [473, 88], [548, 111], [623, 193]]);
  s += text(10, 31, 'D1 Chart mit 20d Kursvorhersage-Verlauf', 'class="head"');
  const days = ['25.10.', '02.11.', '08.11.', '16.11.', '23.11.', '30.11.', '07.12.', '14.12.', '21.12.', '28.12.'];
  days.forEach((t, i) => { s += text(48 + i * 38, 400, t, 'class="day"'); });
  s += text(516, 398, '23.01 | 0,0%', 'class="day"') + text(534, 412, '12.679', 'class="day"');
  s += text(592, 398, '06.02', 'class="day"') + text(592, 412, '12.50', 'class="day"');
  document.getElementById('d1').innerHTML = s + rect(0, 0, 633, 15, '#303030');
}

function drawH4() {
  const c = [
    [61,622,640,628,635],[66,608,655,615,630],[71,606,628,612,620],[96,592,618,597,612,1],[101,580,640,590,604,1],[106,565,605,575,595,1],
    [111,570,600,578,588],[116,540,595,550,580],[120,535,552,540,548],[125,540,720,548,708,1],[131,700,735,705,728,1],[137,655,785,690,700],
    [142,680,735,698,710,1],[147,710,760,720,745,1],[151,690,775,705,730],[175,650,685,668,680],[180,600,675,620,660],[185,610,668,618,645,1],
    [190,580,640,590,630],[195,565,615,575,598],[200,535,585,540,572],[206,510,555,520,545],[211,495,530,503,520],[217,478,510,485,500],
    [223,466,505,488,500,1],[229,490,565,505,515,1],[254,475,625,485,510,1],[259,488,648,500,625,1],[264,495,570,500,525,1],[270,470,530,482,520],
    [275,490,560,498,520,1],[281,485,545,510,528,1],[287,510,552,525,540,1],[293,505,545,522,535],[330,468,528,475,512],[336,452,480,460,472]
  ];
  let s = rect(0, 417, 633, 804, '#d0d0d0') + axis(12800, 50, 461, 27.5, 12, 41, 52, 633);
  s += rect(61, 535, 206, 804, TAN, 'stroke="#c2b094"') + rect(206, 465, 257, 566, TAN, 'stroke="#c2b094"') + rect(254, 480, 270, 648, TAN, 'stroke="#c2b094"') + rect(270, 480, 285, 530, TAN) + rect(285, 500, 331, 540, TAN);
  s += line(49, 445, 633, 445, '#222', 'stroke-width="3"') + line(49, 445, 49, 804, '#111', 'stroke-width="5"');
  s += candles(c, 5) + dots([[331, 513], [342, 513], [388, 512], [466, 573], [623, 648]]);
  s += text(10, 435, 'H4-Chart mit 10d Kursvorhersage-Verlauf', 'class="head"');
  document.getElementById('h4').innerHTML = s;
}

// Ragged lower edge of the bot window
function drawTorn() {
  const ys = [5, 7, 6, 8, 7, 10, 7, 5, 8, 6, 2, 4, 6, 5, 7, 8, 6, 7, 4, 6, 9, 7, 8, 5, 6];
  let d = 'M-3 16L-3 4';
  for (let i = 0; i * 7 <= 730; i++) d += `L${i * 7} ${ys[(i * 7 + (i >> 2)) % ys.length]}`;
  document.getElementById('torn').setAttribute('d', d + 'V16Z');
}

drawH1();
drawD1();
drawH4();
drawTorn();
```
